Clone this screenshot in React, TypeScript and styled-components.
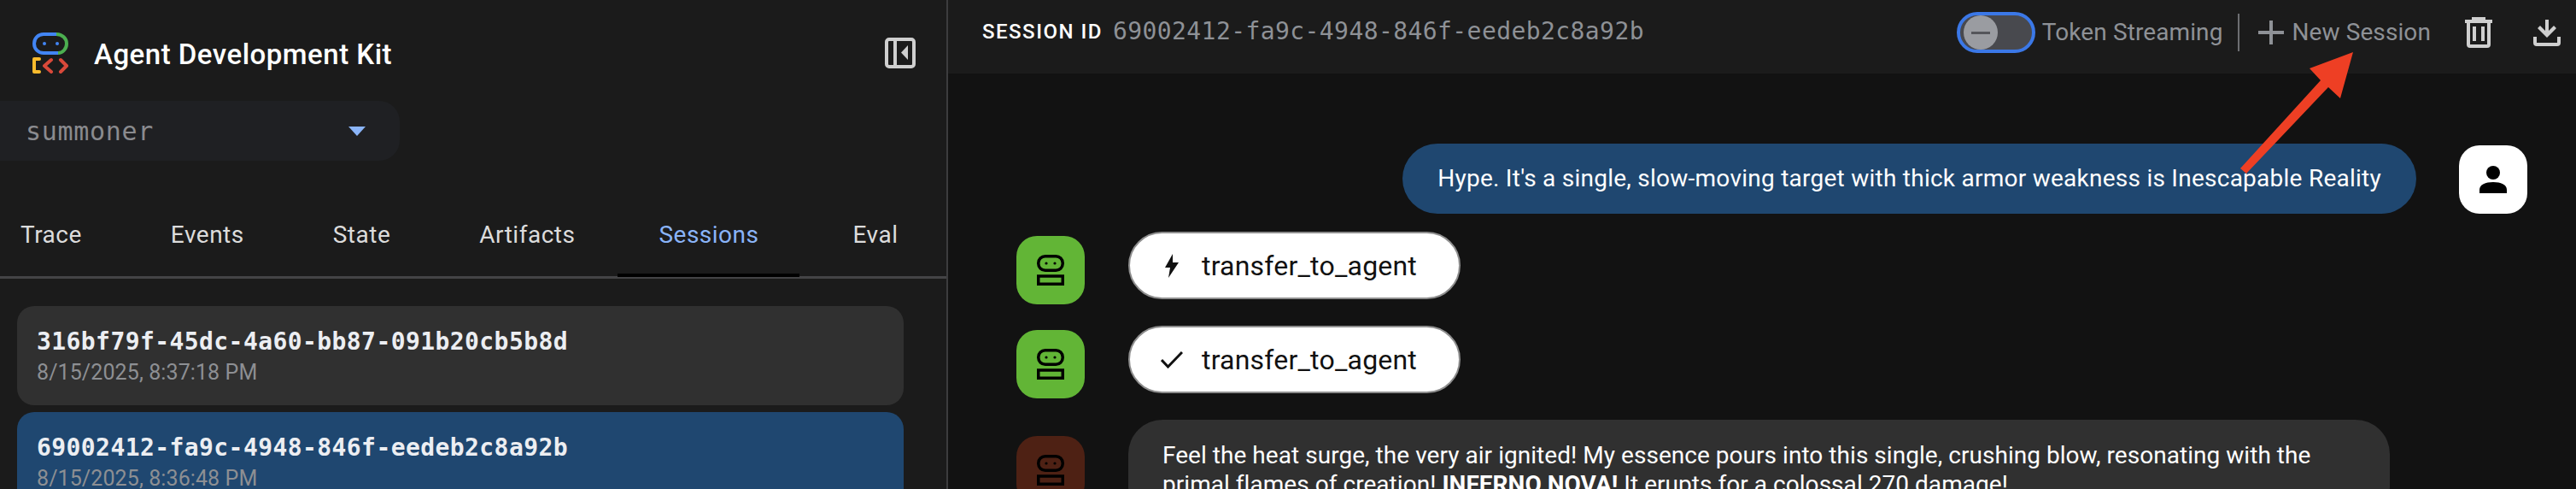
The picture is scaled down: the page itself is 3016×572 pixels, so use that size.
import React from "react";
import styled, { createGlobalStyle } from "styled-components";

const GlobalStyle = createGlobalStyle`
	html, body {
		margin: 0;
		padding: 0;
		background: #121212;
	}
	body {
		width: 3016px;
		height: 572px;
		overflow: hidden;
		font-family: "Roboto", "Liberation Sans", sans-serif;
	}
`;

const mono = `"DejaVu Sans Mono", "Liberation Mono", monospace`;

const Page = styled.div`
	position: relative;
	display: flex;
	width: 3016px;
	height: 572px;
	overflow: hidden;
`;

const Sidebar = styled.aside`
	width: 1110px;
	flex: none;
	box-sizing: border-box;
	background: #1b1b1b;
	border-right: 2px solid #3c3c3e;
	display: flex;
	flex-direction: column;
`;

const Brand = styled.div`
	display: flex;
	flex: none;
	align-items: center;
	height: 118px;
	padding: 6px 36px 0 38px;
	box-sizing: border-box;
`;

const Title = styled.div`
	margin: 2px 0 0 30px;
	color: #fff;
	font-size: 33px;
	font-weight: 500;
	letter-spacing: 0.5px;
	flex: 1;
`;

const PlainIcon = styled.svg`
	display: block;
	flex: none;
`;

const AppSelect = styled.div`
	width: 468px;
	height: 70px;
	flex: none;
	box-sizing: border-box;
	border-radius: 0 24px 24px 0;
	background: #1f2023;
	display: flex;
	align-items: center;
	justify-content: space-between;
	padding: 0 40px 0 30px;
	color: #8a8b8f;
	font-family: ${mono};
	font-size: 30px;
	letter-spacing: 0.7px;
`;

const Caret = styled.div`
	width: 0;
	height: 0;
	border-left: 10px solid transparent;
	border-right: 10px solid transparent;
	border-top: 11px solid #8ab4f8;
`;

const Tabs = styled.nav`
	display: flex;
	flex: none;
	height: 95px;
	margin-top: 40px;
	border-bottom: 3px solid #444446;
`;

const Tab = styled.div<{ $active?: boolean; $gap: number }>`
	position: relative;
	padding: 0 48px;
	margin-right: ${({ $gap }) => $gap}px;
	height: 95px;
	line-height: 94px;
	font-size: 28px;
	letter-spacing: 0.5px;
	white-space: nowrap;
	color: ${({ $active }) => ($active ? "#8ab4f8" : "#dcdcdc")};
	&:first-child {
		padding-left: 24px;
	}
	&:last-child {
		padding-right: 0;
	}
	${({ $active }) =>
		$active &&
		`
		&::after {
			content: "";
			position: absolute;
			left: 0;
			right: 0;
			bottom: -1px;
			height: 4px;
			background: #000;
		}
	`}
`;

const SessionList = styled.div`
	display: flex;
	flex-direction: column;
	gap: 8px;
	padding: 32px 50px 0 20px;
`;

const SessionCard = styled.div<{ $selected?: boolean }>`
	height: 116px;
	flex: none;
	box-sizing: border-box;
	padding: 25px 23px 0;
	border-radius: 20px;
	background: ${({ $selected }) => ($selected ? "#1f4770" : "#303030")};
`;

const SessionName = styled.div`
	color: #eceef2;
	font-family: ${mono};
	font-size: 28px;
	font-weight: 700;
	letter-spacing: 0.42px;
	line-height: 34px;
`;

const SessionDate = styled.div`
	margin-top: 3px;
	color: #8d8f93;
	font-size: 25px;
	letter-spacing: 0.1px;
	line-height: 32px;
`;

const Main = styled.main`
	flex: 1;
	display: flex;
	flex-direction: column;
	min-width: 0;
`;

const Header = styled.header`
	height: 86px;
	flex: none;
	background: #1b1b1b;
	display: flex;
	align-items: flex-start;
	padding: 14px 18px 0 40px;
	box-sizing: border-box;
`;

const SessionLabel = styled.div`
	color: #fff;
	font-size: 24px;
	font-weight: 500;
	letter-spacing: 1.5px;
	line-height: 46px;
	margin-right: 12px;
`;

const SessionValue = styled.div`
	color: #8e9196;
	font-family: ${mono};
	font-size: 28px;
	letter-spacing: 0.42px;
	line-height: 46px;
	flex: 1;
`;

const Toggle = styled.div`
	width: 92px;
	height: 48px;
	box-sizing: border-box;
	border: 4px solid #3b78e7;
	border-radius: 24px;
	background: #48494e;
	display: flex;
	align-items: center;
	padding-left: 4px;
	margin-right: 8px;
`;

const Thumb = styled.div`
	width: 40px;
	height: 40px;
	border-radius: 50%;
	background: #9a9ca1;
	display: flex;
	align-items: center;
	justify-content: center;
	&::before {
		content: "";
		width: 22px;
		height: 3px;
		background: #55565b;
	}
`;

const HeaderText = styled.div`
	color: #8e9196;
	font-size: 28px;
	letter-spacing: 0.1px;
	line-height: 48px;
	white-space: nowrap;
`;

const HeaderDivider = styled.div`
	width: 2px;
	height: 44px;
	margin: 2px 22px 0 18px;
	background: #6d6e72;
`;

const PlusIcon = styled(PlainIcon)`
	margin: 10px 9px 0 0;
`;

const TrailingIcon = styled(PlainIcon)<{ $gap: number; $top: number }>`
	margin-left: ${({ $gap }) => $gap}px;
	margin-top: ${({ $top }) => $top}px;
`;

const Chat = styled.div`
	flex: 1;
	background: #121212;
	display: flex;
	flex-direction: column;
	padding: 82px 57px 0 80px;
	min-height: 0;
	overflow: hidden;
`;

const Row = styled.div<{ $user?: boolean; $top?: number }>`
	display: flex;
	align-items: flex-start;
	flex: none;
	margin-top: ${({ $top }) => $top ?? 0}px;
	justify-content: ${({ $user }) => ($user ? "flex-end" : "flex-start")};
`;

const UserBubble = styled.div`
	height: 82px;
	box-sizing: border-box;
	padding: 0 41px;
	margin-right: 50px;
	border-radius: 41px;
	background: #1f4770;
	color: #fff;
	font-size: 28px;
	letter-spacing: 0.25px;
	line-height: 82px;
	white-space: nowrap;
`;

const Avatar = styled.div<{ $bg: string; $top?: number }>`
	width: 80px;
	height: 80px;
	flex: none;
	margin-top: ${({ $top }) => $top ?? 0}px;
	border-radius: 24px;
	background: ${({ $bg }) => $bg};
	display: flex;
	align-items: center;
	justify-content: center;
`;

const CallPill = styled.div`
	margin-left: 51px;
	margin-top: -5px;
	width: 389px;
	height: 79px;
	box-sizing: border-box;
	border: 2px solid #8e8e8e;
	border-radius: 40px;
	background: #fff;
	color: #111;
	font-size: 32px;
	letter-spacing: 0.2px;
	display: flex;
	align-items: center;
	padding-left: 36px;
`;

const PillIcon = styled.div`
	width: 26px;
	flex: none;
	display: flex;
	justify-content: center;
	margin-right: 22px;
`;

const AgentBubble = styled.div`
	margin-left: 51px;
	margin-top: -19px;
	width: 1477px;
	box-sizing: border-box;
	padding: 25px 40px;
	border-radius: 40px;
	background: #303030;
	color: #fff;
	font-size: 28px;
	letter-spacing: 0.04px;
	line-height: 34px;
`;

const Arrow = styled.svg`
	position: absolute;
	left: 2610px;
	top: 50px;
`;

const Logo = () => (
	<PlainIcon width="42" height="48" viewBox="0 0 42 48" fill="none">
		<path d="M28 2H13C6.8 2 2 6.6 2 13s4.800 11 11 11h17" stroke="#4285f4" strokeWidth="4" />
		<path d="M28 2c7 0 12 5 12 11s-4.500 11-10 11" stroke="#4caf50" strokeWidth="4" />
		<circle cx="14" cy="13" r="2" fill="#4285f4" />
		<circle cx="29" cy="13" r="2" fill="#4285f4" />
		<path d="M8 31H2v15h6" stroke="#f9bb2d" strokeWidth="4" strokeLinecap="round" strokeLinejoin="round" />
		<path d="M22 32l-8 7 8 7M33 32l7 7-7 7" stroke="#d9493a" strokeWidth="4" strokeLinecap="round" strokeLinejoin="round" />
	</PlainIcon>
);

const Robot = () => (
	<PlainIcon width="32" height="36" viewBox="0 0 32 36" fill="none" stroke="#000" strokeWidth="3.500">
		<rect x="1.750" y="1.750" width="28.500" height="16.500" rx="8" />
		<circle cx="11" cy="10" r="1.600" fill="#000" stroke="none" />
		<circle cx="21" cy="10" r="1.600" fill="#000" stroke="none" />
		<rect x="1.750" y="25" width="28.500" height="9.250" />
	</PlainIcon>
);

export default function App() {
	return (
		<Page>
			<GlobalStyle />
			<Sidebar>
				<Brand>
					<Logo />
					<Title>Agent Development Kit</Title>
					<PlainIcon width="36" height="36" viewBox="0 0 36 36" fill="none" stroke="#cfcfcf" strokeWidth="4">
						<rect x="2" y="2" width="32" height="32" rx="3" />
						<path d="M12 2v32" />
						<path d="M27 9l-8 8.500 8 8.500z" fill="#cfcfcf" stroke="none" />
					</PlainIcon>
				</Brand>
				<AppSelect>
					<span>summoner</span>
					<Caret />
				</AppSelect>
				<Tabs>
					<Tab $gap={8}>Trace</Tab>
					<Tab $gap={8}>Events</Tab>
					<Tab $gap={8}>State</Tab>
					<Tab $gap={2}>Artifacts</Tab>
					<Tab $gap={14} $active>Sessions</Tab>
					<Tab $gap={0}>Eval</Tab>
				</Tabs>
				<SessionList>
					<SessionCard>
						<SessionName>316bf79f-45dc-4a60-bb87-091b20cb5b8d</SessionName>
						<SessionDate>8/15/2025, 8:37:18 PM</SessionDate>
					</SessionCard>
					<SessionCard $selected>
						<SessionName>69002412-fa9c-4948-846f-eedeb2c8a92b</SessionName>
						<SessionDate>8/15/2025, 8:36:48 PM</SessionDate>
					</SessionCard>
				</SessionList>
			</Sidebar>
			<Main>
				<Header>
					<SessionLabel>SESSION ID</SessionLabel>
					<SessionValue>69002412-fa9c-4948-846f-eedeb2c8a92b</SessionValue>
					<Toggle>
						<Thumb />
					</Toggle>
					<HeaderText>Token Streaming</HeaderText>
					<HeaderDivider />
					<PlusIcon width="30" height="28" viewBox="0 0 30 28" fill="none" stroke="#8e9196" strokeWidth="4">
						<path d="M15 0v28M0 14h30" />
					</PlusIcon>
					<HeaderText>New Session</HeaderText>
					<TrailingIcon $gap={40} $top={6} width="32" height="36" viewBox="0 0 32 36" fill="none" stroke="#cfcfcf" strokeWidth="4">
						<path d="M0 5h32M10 5V2h12v3M4 5v27a2 2 0 0 0 2 2h20a2 2 0 0 0 2-2V5" />
						<path d="M11 11v17M21 11v17" />
					</TrailingIcon>
					<TrailingIcon $gap={48} $top={9} width="32" height="31" viewBox="0 0 32 31" fill="none" stroke="#cfcfcf" strokeWidth="4">
						<path d="M14 0h4v13l6-6 3 3-11 11L5 10l3-3 6 6z" fill="#cfcfcf" stroke="none" />
						<path d="M2 20v7a2 2 0 0 0 2 2h24a2 2 0 0 0 2-2v-7" />
					</TrailingIcon>
				</Header>
				<Chat>
					<Row $user>
						<UserBubble>Hype. It's a single, slow-moving target with thick armor weakness is Inescapable Reality</UserBubble>
						<Avatar $bg="#fff" $top={2}>
							<PlainIcon width="32" height="32" viewBox="0 0 32 32" fill="#000">
								<ellipse cx="16" cy="8" rx="8" ry="8" />
								<path d="M0 32v-4c0-6 7-9 16-9s16 3 16 9v4z" />
							</PlainIcon>
						</Avatar>
					</Row>
					<Row $top={26}>
						<Avatar $bg="#62b536">
							<Robot />
						</Avatar>
						<CallPill>
							<PillIcon>
								<PlainIcon width="16" height="28" viewBox="0 0 16 28" fill="#111">
									<path d="M9 0L0 16h6l-2 12L16 10H9z" />
								</PlainIcon>
							</PillIcon>
							transfer_to_agent
						</CallPill>
					</Row>
					<Row $top={30}>
						<Avatar $bg="#62b536">
							<Robot />
						</Avatar>
						<CallPill>
							<PillIcon>
								<PlainIcon width="26" height="20" viewBox="0 0 26 20" fill="none" stroke="#111" strokeWidth="3">
									<path d="M1 10l7.500 8L25 1" />
								</PlainIcon>
							</PillIcon>
							transfer_to_agent
						</CallPill>
					</Row>
					<Row $top={44}>
						<Avatar $bg="#4e2114">
							<Robot />
						</Avatar>
						<AgentBubble>
							Feel the heat surge, the very air ignited! My essence pours into this single, crushing blow, resonating with the primal flames of creation! <b>INFERNO NOVA!</b> It erupts for a colossal 270 damage!
						</AgentBubble>
					</Row>
				</Chat>
			</Main>
			<Arrow width="150" height="160" viewBox="0 0 150 160">
				<path d="M145 11L94 30L107 44L13 147L20 153L116 52L130 65Z" fill="#ee3f24" />
			</Arrow>
		</Page>
	);
}
